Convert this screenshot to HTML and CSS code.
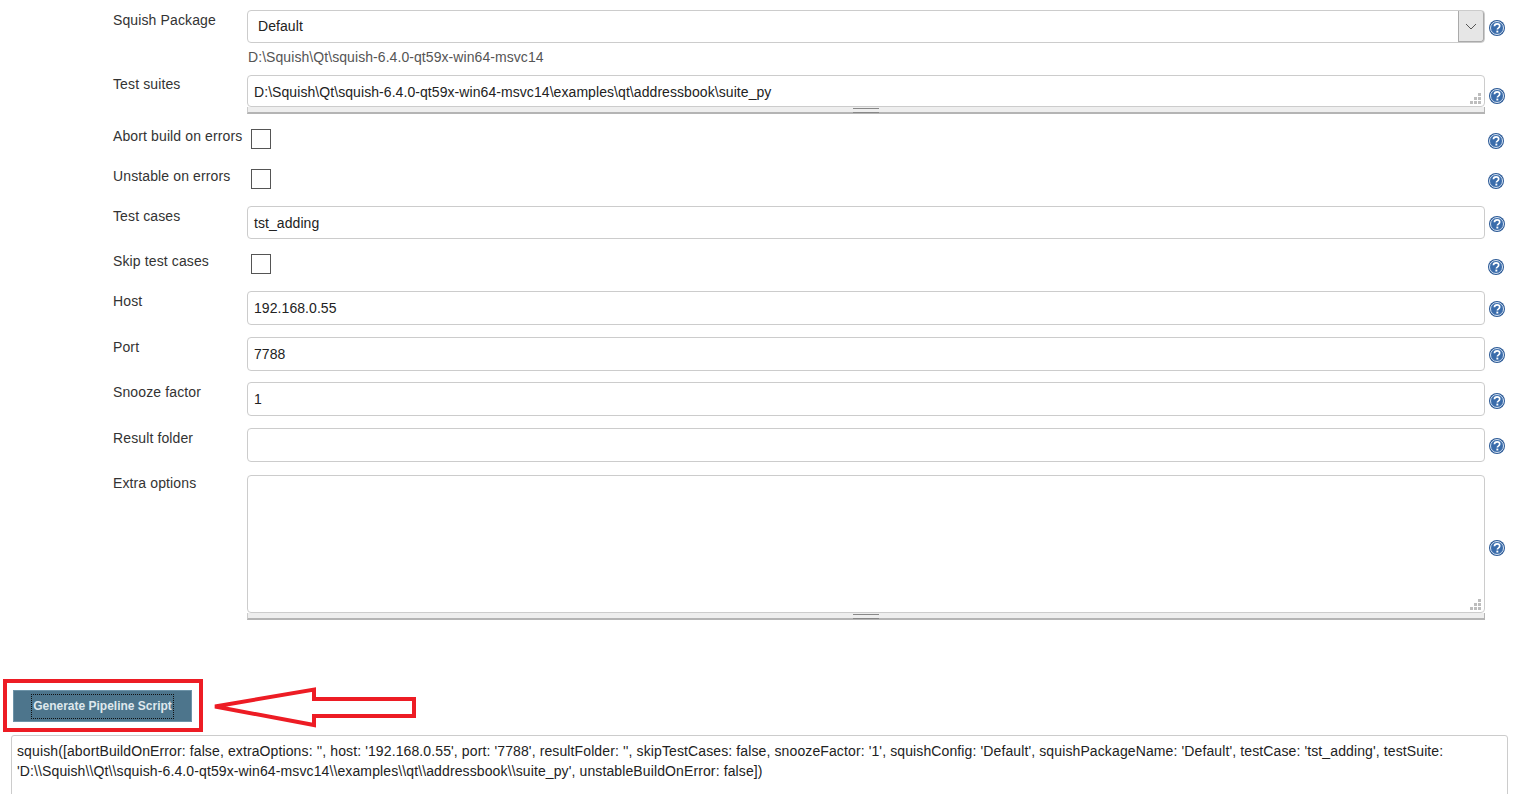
FILE: index.html
```html
<!DOCTYPE html>
<html lang="en">
<head>
<meta charset="utf-8">
<title>Pipeline Syntax</title>
<link rel="stylesheet" href="styles.css">
</head>
<body>
<svg width="0" height="0" class="defs" aria-hidden="true">
  <symbol id="help" viewBox="0 0 16 16">
    <circle cx="8" cy="8" r="8" fill="#2c5a96"/>
    <circle cx="8" cy="8" r="6.5" fill="#3a6cab" stroke="#d5e2f2" stroke-width="1"/>
    <path d="M5.4 6.3C5.5 4.7 6.7 3.8 8.1 3.8c1.5 0 2.6.9 2.6 2.2 0 1.1-.7 1.6-1.4 2.1-.6.4-.9.8-.9 1.5" fill="none" stroke="#fff" stroke-width="1.7"/>
    <rect x="7.4" y="10.6" width="1.9" height="1.9" fill="#fff"/>
  </symbol>
  <symbol id="grip" viewBox="0 0 11 11">
    <path fill="#bdbdbd" d="M8 0h3v3H8zM4 4h3v3H4zM8 4h3v3H8zM0 8h3v3H0zM4 8h3v3H4zM8 8h3v3H8z"/>
  </symbol>
</svg>
<main class="form">
  <div class="row r-package">
    <label class="lbl">Squish Package</label>
    <div class="field select"><span class="select-text">Default</span><span class="select-btn"><svg width="12" height="7" viewBox="0 0 12 7"><path d="M1 1l5 5 5-5" fill="none" stroke="#555" stroke-width="1"/></svg></span></div>
    <svg class="help"><use href="#help"/></svg>
  </div>
  <div class="path-note">D:\Squish\Qt\squish-6.4.0-qt59x-win64-msvc14</div>
  <div class="row r-suites">
    <label class="lbl">Test suites</label>
    <div class="area-wrap">
      <div class="field short">D:\Squish\Qt\squish-6.4.0-qt59x-win64-msvc14\examples\qt\addressbook\suite_py<svg class="grip"><use href="#grip"/></svg></div>
      <div class="handle"><span class="handle-mark"></span></div>
    </div>
    <svg class="help"><use href="#help"/></svg>
  </div>
  <div class="row r-abort"><label class="lbl">Abort build on errors</label><span class="check"></span><svg class="help"><use href="#help"/></svg></div>
  <div class="row r-unstable"><label class="lbl">Unstable on errors</label><span class="check"></span><svg class="help"><use href="#help"/></svg></div>
  <div class="row r-cases"><label class="lbl">Test cases</label><div class="field cases">tst_adding</div><svg class="help"><use href="#help"/></svg></div>
  <div class="row r-skip"><label class="lbl">Skip test cases</label><span class="check"></span><svg class="help"><use href="#help"/></svg></div>
  <div class="row r-host"><label class="lbl">Host</label><div class="field">192.168.0.55</div><svg class="help"><use href="#help"/></svg></div>
  <div class="row r-port"><label class="lbl">Port</label><div class="field">7788</div><svg class="help"><use href="#help"/></svg></div>
  <div class="row r-snooze"><label class="lbl">Snooze factor</label><div class="field">1</div><svg class="help"><use href="#help"/></svg></div>
  <div class="row r-result"><label class="lbl">Result folder</label><div class="field"></div><svg class="help"><use href="#help"/></svg></div>
  <div class="row r-extra">
    <label class="lbl">Extra options</label>
    <div class="area-wrap">
      <div class="field tall"><svg class="grip"><use href="#grip"/></svg></div>
      <div class="handle"><span class="handle-mark"></span></div>
    </div>
    <svg class="help"><use href="#help"/></svg>
  </div>
</main>
<div class="generate"><button class="gen-btn" type="button"><span class="gen-text">Generate Pipeline Script</span></button></div>
<div class="output">squish([abortBuildOnError: false, extraOptions: '', host: '192.168.0.55', port: '7788', resultFolder: '', skipTestCases: false, snoozeFactor: '1', squishConfig: 'Default', squishPackageName: 'Default', testCase: 'tst_adding', testSuite: 'D:\\Squish\\Qt\\squish-6.4.0-qt59x-win64-msvc14\\examples\\qt\\addressbook\\suite_py', unstableBuildOnError: false])</div>
<svg class="annotation" width="420" height="56" viewBox="0 0 420 56" aria-hidden="true">
  <rect x="5" y="2" width="196" height="49" fill="none" stroke="#ed1c24" stroke-width="4"/>
  <path d="M215 27.5L314 10.5V20H414V37H314V46Z" fill="none" stroke="#ed1c24" stroke-width="4"/>
</svg>
</body>
</html>
```
FILE: styles.css
```css
html, body { margin: 0; padding: 0; background: #fff; height: 794px; overflow: hidden; }
body { position: relative; font-family: "Liberation Sans", Arial, sans-serif; font-size: 14px; color: #333; }
.defs { position: absolute; }
.form { padding: 10px 0 0 113px; width: 1392px; }
.row { display: flex; align-items: flex-start; }
.lbl { width: 134px; flex: none; line-height: 20px; color: #333; white-space: nowrap; letter-spacing: 0.12px; }
.field { box-sizing: border-box; width: 1238px; flex: none; height: 34px; border: 1px solid #ccc; border-radius: 4px; padding: 0 6px; line-height: 32px; color: #222; background: #fff; position: relative; letter-spacing: 0.07px; }
.cases { height: 33px; line-height: 33px; }
.select { height: 33px; padding: 0 0 0 10px; display: flex; justify-content: space-between; }
.select-text { line-height: 30px; }
.select-btn { width: 26px; height: 31px; background: #e6e6e6; border-left: 1px solid #aaa; border-bottom: 1px solid #aaa; border-right: 1px solid #aaa; border-radius: 0 3px 3px 0; box-sizing: border-box; display: flex; align-items: center; justify-content: center; }
.help { width: 16px; height: 16px; flex: none; margin-left: 4px; }
.path-note { margin: 6px 0 0 135px; line-height: 16px; height: 16px; color: #555; letter-spacing: 0.07px; }
.area-wrap { width: 1238px; flex: none; }
.short { height: 32px; line-height: 33px; }
.tall { height: 138px; }
.grip { position: absolute; right: 3px; bottom: 2px; width: 11px; height: 11px; }
.handle { box-sizing: border-box; height: 7px; background: #eee; border-bottom: 2px solid #b4b4b4; border-left: 1px solid #ccc; border-right: 1px solid #b4b4b4; display: flex; justify-content: center; }
.handle-mark { width: 26px; height: 3px; margin-top: 1px; border-top: 1px solid #888; border-bottom: 1px solid #888; }
.check { box-sizing: border-box; width: 20px; height: 20px; flex: none; border: 1px solid #555; margin-left: 4px; }
.check + .help { margin: 4px 0 0 1217px; }
.r-package .help { margin-top: 10px; }
.r-suites { margin-top: 10px; }
.r-suites .lbl { margin-top: -1px; }
.r-suites .help { margin-top: 13px; }
.r-abort { margin-top: 15px; }
.r-abort .lbl { margin-top: -3px; }
.r-unstable { margin-top: 20px; }
.r-unstable .lbl { margin-top: -3px; }
.r-cases { margin-top: 17px; }
.r-cases .help { margin-top: 10px; }
.r-skip { margin-top: 15px; }
.r-skip .lbl { margin-top: -3px; }
.r-skip .help { margin-top: 5px; }
.r-host { margin-top: 16px; }
.r-host .help { margin-top: 10px; }
.r-port { margin-top: 12px; }
.r-port .help { margin-top: 10px; }
.r-snooze { margin-top: 11px; }
.r-snooze .help { margin-top: 11px; }
.r-result { margin-top: 12px; }
.r-result .help { margin-top: 10px; }
.r-extra { margin-top: 13px; }
.r-extra .lbl { margin-top: -2px; }
.r-extra .help { margin-top: 65px; }
.generate { margin: 70px 0 0 13px; height: 32px; }
.gen-btn { box-sizing: border-box; width: 179px; height: 32px; background: #4d758c; border: 1px solid #6d93a8; padding: 0; display: flex; align-items: center; justify-content: center; font-family: "Liberation Sans", Arial, sans-serif; font-size: 12px; font-weight: bold; color: #dfe8ed; }
.gen-text { outline: 1px dotted #111; padding: 4px 1px; line-height: 15px; }
.output { box-sizing: border-box; margin: 13px 0 0 11px; width: 1497px; height: 70px; border: 1px solid #ccc; border-radius: 3px 3px 0 0; padding: 5px 5px; line-height: 20px; color: #222; letter-spacing: 0.115px; }
.annotation { position: absolute; left: 0; top: 679px; }
```
